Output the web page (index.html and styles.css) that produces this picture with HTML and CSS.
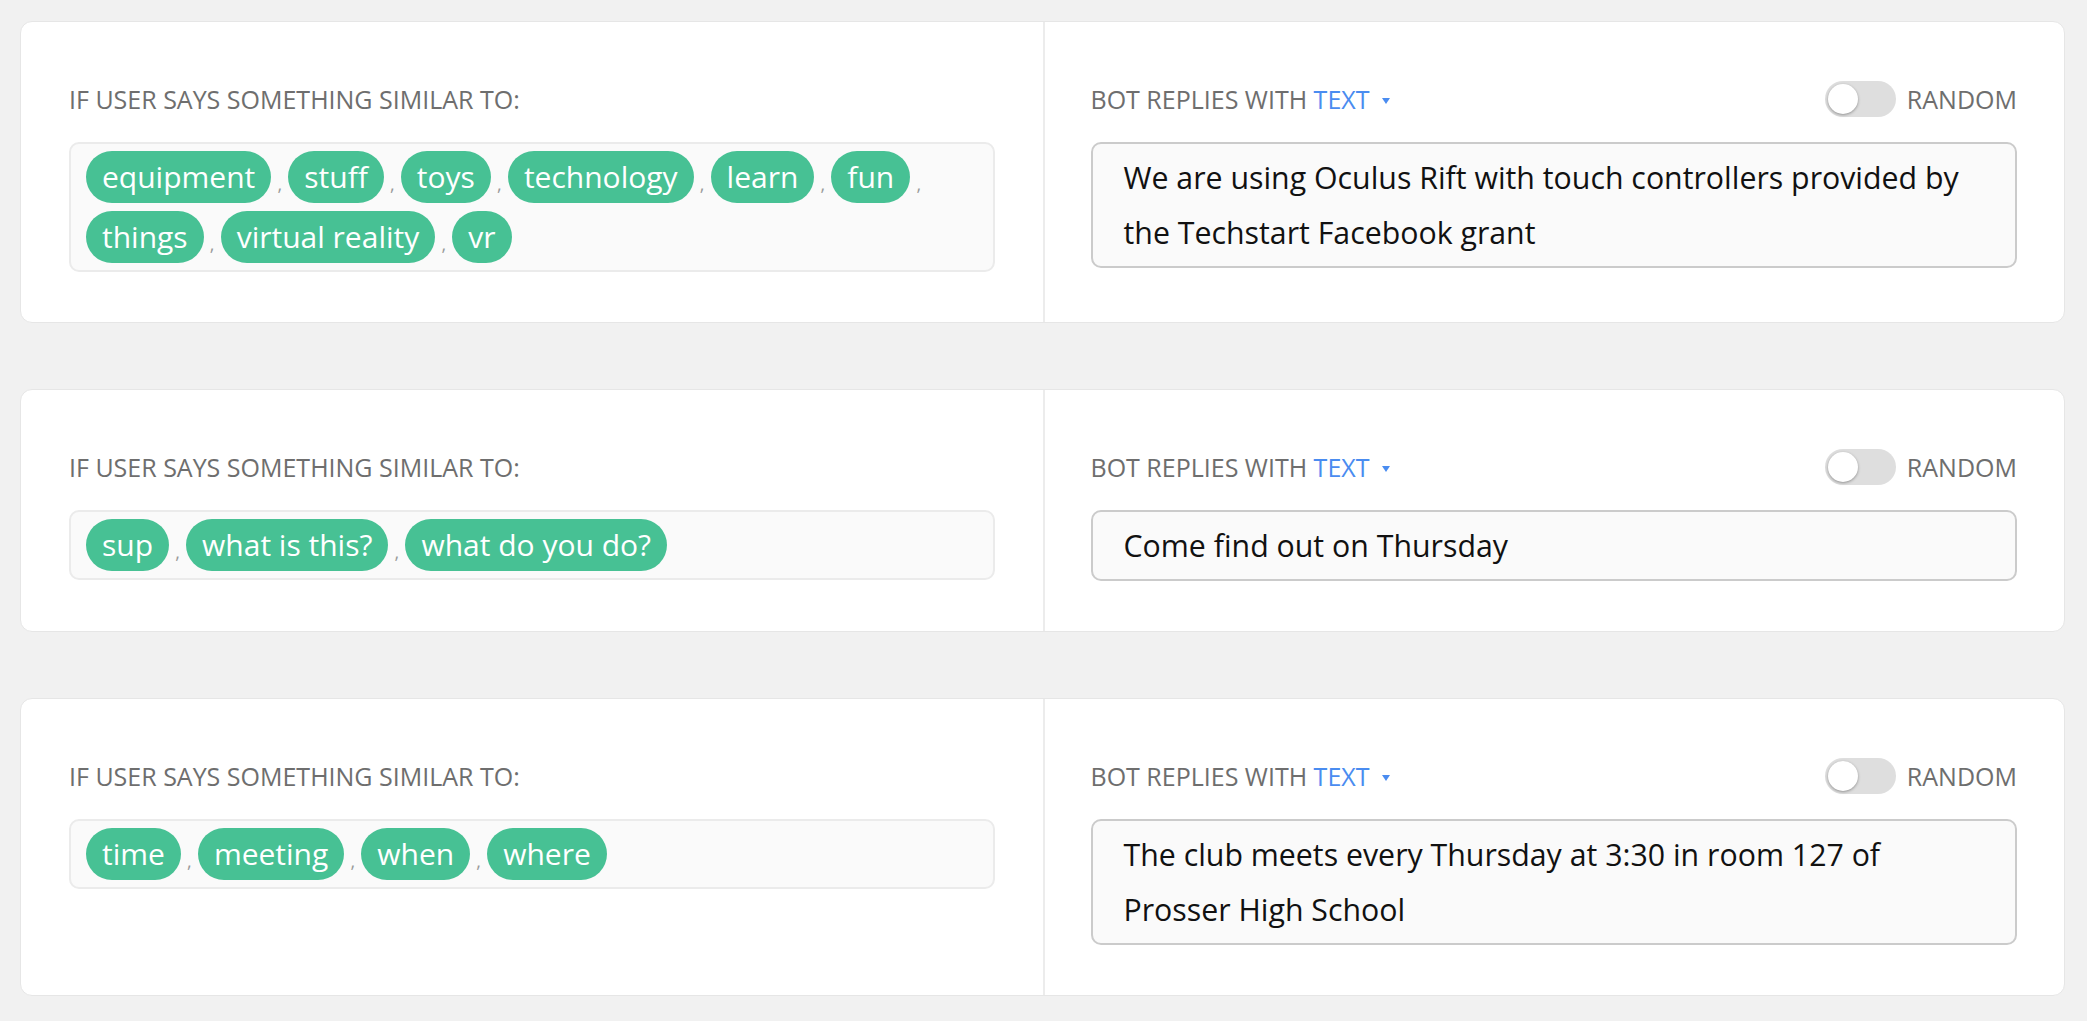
FILE: index.html
```html
<!DOCTYPE html>
<html>
<head>
<meta charset="utf-8">
<link rel="stylesheet" href="styles.css">
</head>
<body>
<div class="card">
  <div class="col">
    <div class="head"><span class="label">IF USER SAYS SOMETHING SIMILAR TO:</span></div>
    <div class="tags">
      <span class="tag">equipment</span><span class="comma">,</span>
      <span class="tag">stuff</span><span class="comma">,</span>
      <span class="tag">toys</span><span class="comma">,</span>
      <span class="tag">technology</span><span class="comma">,</span>
      <span class="tag">learn</span><span class="comma">,</span>
      <span class="tag">fun</span><span class="comma">,</span>
      <span class="tag">things</span><span class="comma">,</span>
      <span class="tag">virtual reality</span><span class="comma">,</span>
      <span class="tag">vr</span>
    </div>
  </div>
  <div class="col">
    <div class="head">
      <span class="label">BOT REPLIES WITH <span class="type">TEXT</span><span class="caret"></span></span>
      <span class="random"><span class="toggle"><span class="knob"></span></span><span class="label">RANDOM</span></span>
    </div>
    <div class="reply">We are using Oculus Rift with touch controllers provided by the Techstart Facebook grant</div>
  </div>
</div>

<div class="card">
  <div class="col">
    <div class="head"><span class="label">IF USER SAYS SOMETHING SIMILAR TO:</span></div>
    <div class="tags">
      <span class="tag">sup</span><span class="comma">,</span>
      <span class="tag">what is this?</span><span class="comma">,</span>
      <span class="tag">what do you do?</span>
    </div>
  </div>
  <div class="col">
    <div class="head">
      <span class="label">BOT REPLIES WITH <span class="type">TEXT</span><span class="caret"></span></span>
      <span class="random"><span class="toggle"><span class="knob"></span></span><span class="label">RANDOM</span></span>
    </div>
    <div class="reply">Come find out on Thursday</div>
  </div>
</div>

<div class="card">
  <div class="col">
    <div class="head"><span class="label">IF USER SAYS SOMETHING SIMILAR TO:</span></div>
    <div class="tags">
      <span class="tag">time</span><span class="comma">,</span>
      <span class="tag">meeting</span><span class="comma">,</span>
      <span class="tag">when</span><span class="comma">,</span>
      <span class="tag">where</span>
    </div>
  </div>
  <div class="col">
    <div class="head">
      <span class="label">BOT REPLIES WITH <span class="type">TEXT</span><span class="caret"></span></span>
      <span class="random"><span class="toggle"><span class="knob"></span></span><span class="label">RANDOM</span></span>
    </div>
    <div class="reply">The club meets every Thursday at 3:30 in room 127 of Prosser High School</div>
  </div>
</div>
</body>
</html>
```
FILE: styles.css
```css
html, body {
  margin: 0;
  background: #f1f1f1;
}
body {
  padding: 21px 22px 0 20px;
  font-family: "Open Sans", "Noto Sans", sans-serif;
}
.card {
  display: grid;
  grid-template-columns: 1fr 1fr;
  background: #fff;
  border: 1px solid #e6e6e6;
  border-radius: 12px;
  margin-bottom: 66px;
}
.col {
  padding: 59px 48px 50px 48px;
  min-width: 0;
}
.col + .col {
  border-left: 2px solid #ececec;
  padding-left: 46px;
  padding-right: 47px;
}
.head {
  height: 36px;
  display: flex;
  align-items: center;
  justify-content: space-between;
  margin-bottom: 25px;
}
.label {
  font-size: 25px;
  color: #6e6e6e;
  white-space: nowrap;
}
.type {
  color: #4a8cf0;
}
.caret {
  display: inline-block;
  width: 0;
  height: 0;
  border-left: 4.5px solid transparent;
  border-right: 4.5px solid transparent;
  border-top: 6px solid #4a8cf0;
  margin-left: 13px;
  vertical-align: 5px;
}
.random {
  display: flex;
  align-items: center;
  gap: 11px;
}
.toggle {
  width: 71px;
  height: 36px;
  border-radius: 18px;
  background: #dedede;
  position: relative;
}
.knob {
  position: absolute;
  left: 3px;
  top: 3px;
  width: 30px;
  height: 30px;
  border-radius: 50%;
  background: #fff;
  box-shadow: 0 1px 3px rgba(0,0,0,0.35);
}
.tags {
  border: 2px solid #ebebeb;
  border-radius: 10px;
  background: #fafafa;
  padding: 7px 15px;
  display: flex;
  flex-wrap: wrap;
  align-items: center;
  row-gap: 8px;
}
.tag {
  background: #47c194;
  color: #fff;
  height: 52px;
  line-height: 52px;
  border-radius: 26px;
  padding: 0 16px;
  font-size: 30px;
  white-space: nowrap;
}
.comma {
  color: #999;
  font-size: 18px;
  width: 17px;
  text-align: center;
  align-self: flex-end;
  line-height: 38px;
}
.reply {
  border: 2px solid #cbcbcb;
  border-radius: 10px;
  background: #fafafa;
  padding: 6px 31px;
  font-size: 30.3px;
  line-height: 55px;
  color: #111;
}
```
